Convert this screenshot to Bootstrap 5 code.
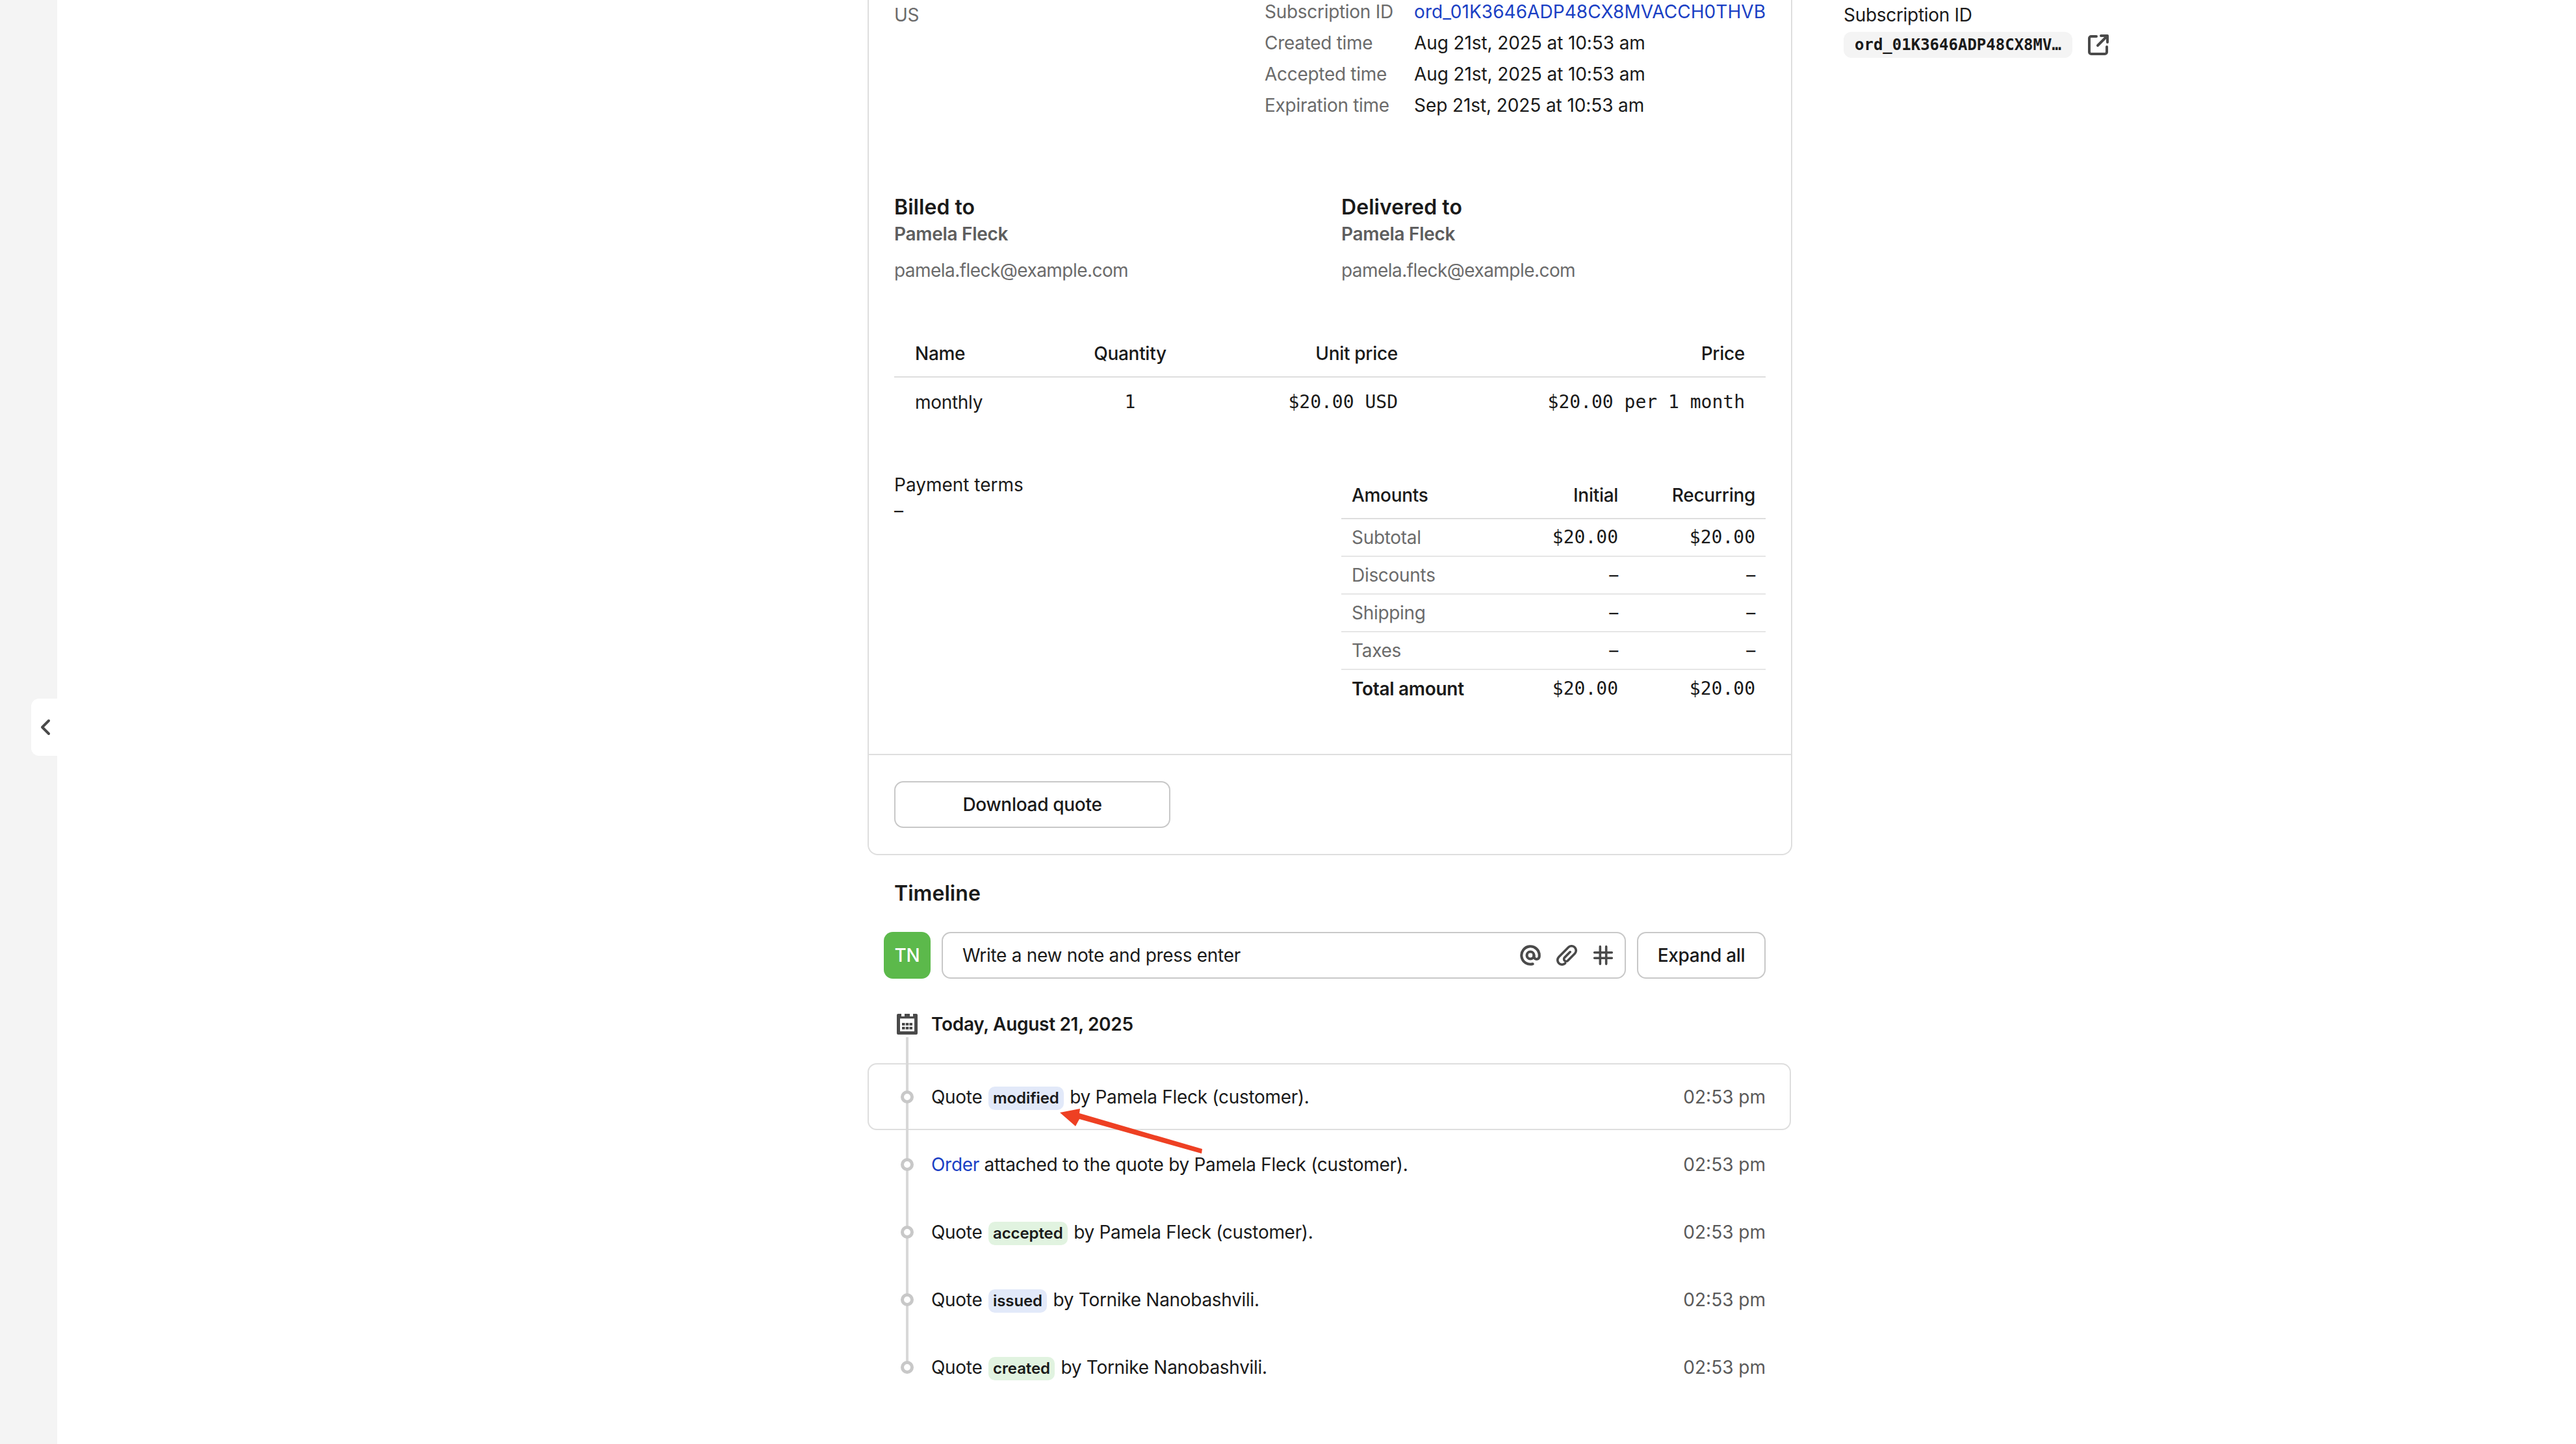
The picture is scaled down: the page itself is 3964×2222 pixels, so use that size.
<!DOCTYPE html>
<html lang="en">
<head>
  <meta charset="UTF-8" />
  <title>Quote</title>
  <link href="https://cdn.jsdelivr.net/npm/bootstrap@5.3.2/dist/css/bootstrap.min.css" rel="stylesheet">
  <style>
    body { font-family: Inter, "Liberation Sans", sans-serif; font-size: 28px; line-height: 40px; letter-spacing: -0.3px; color: #1a1a1a; background: #fff; overflow: hidden; }
    .mono { font-family: "DejaVu Sans Mono", "Liberation Mono", monospace; letter-spacing: 0; }
    .muted-text { color: #6b6b6b; }
    a.blue-link { color: #1a3fc4; text-decoration: none; }
    .info-row a.blue-link { letter-spacing: 0.05px; }

    .side-rail { width: 88px; background: #f4f4f4; flex-shrink: 0; }
    .rail-tab { top: 1075px; left: 48px; width: 40px; height: 88px; background: #fff; border-radius: 12px 0 0 12px; padding-left: 3px; }
    .page-main { margin-top: -6px; padding-left: 1247px; }

    .quote-card { width: 1423px; border: 2px solid #dedede; border-top: 0; border-radius: 0 0 16px 16px; --bs-card-bg: #fff; }
    .quote-body { padding: 0 39px 72px; }
    .quote-foot { padding: 40px 39px; background: #fff; border-top: 2px solid #dedede; border-radius: 0 0 16px 16px !important; }
    .us-cell { padding-top: 9px; }
    .info-row { height: 48px; line-height: 48px; }
    .info-label { width: 230px; }
    .info-value { letter-spacing: -0.1px; }
    .bill-row { margin-top: 113px; }
    .split-left { width: 688px; flex-shrink: 0; }
    .sec-title { font-size: 32px; font-weight: 600; letter-spacing: 0.05px; }
    .person-name { font-weight: 600; color: #5e5e5e; margin-top: 1px; }
    .person-mail { margin-top: 16px; letter-spacing: -0.55px; }

    .item-table { table-layout: fixed; margin: 72px 0 70px; --bs-table-color: #1a1a1a; }
    .item-table th, .item-table td { padding: 0 32px; vertical-align: middle; font-weight: 500; }
    .item-table thead th { height: 72px; border-bottom: 2px solid #dedede; }
    .item-table tbody td { height: 76px; border: 0; font-weight: 400; }
    .w-name { width: 224px; } .w-qty { width: 278px; } .w-unit { width: 305px; }
    .terms-label { letter-spacing: 0; }

    .sum-table { table-layout: fixed; width: 653px; margin: 0; --bs-table-color: #1a1a1a; }
    .sum-table th, .sum-table td { padding: 0 16px; vertical-align: middle; height: 58px; border-bottom: 2px solid #e6e6e6; font-weight: 400; white-space: nowrap; }
    .sum-table thead th { height: 72px; font-weight: 500; border-bottom-color: #dedede; }
    .sum-table tr:last-child td { border-bottom: 0; }
    .sum-table .total-label { font-weight: 600; }
    .w-initial { width: 236px; } .w-recur { width: 211px; }
    .sum-table td.muted-text { color: #6b6b6b; }

    .plain-btn { font-size: 28px; font-weight: 500; line-height: 40px; letter-spacing: -0.3px; color: #1a1a1a; background: #fff; border: 2px solid #c8c8c8; border-radius: 14px; height: 72px; padding: 0; }
    .dl-btn { width: 425px; }
    .expand-btn { width: 198px; }

    .timeline-head { margin: 39px 0 0 41px; }
    .note-row { margin: 39px 0 0 25px; width: 1357px; gap: 17px; }
    .avatar-box { width: 72px; height: 72px; background: #5cb94b; color: #fff; border-radius: 14px; font-weight: 500; flex-shrink: 0; }
    .note-field { height: 72px; border: 2px solid #c8c8c8; border-radius: 14px; padding: 0 17px 0 30px; gap: 24px; }
    .note-input { padding: 0; font-size: 28px; letter-spacing: -0.3px; color: #1a1a1a; }
    .note-input::placeholder { color: #1a1a1a; opacity: 1; }
    .note-icon { width: 32px; height: 32px; flex-shrink: 0; fill: none; stroke: #4a4a4a; stroke-width: 2.7; stroke-linecap: round; stroke-linejoin: round; }
    .note-icon.clip-icon { stroke-width: 2.4; }

    .date-row { margin: 54px 0 44px 45px; height: 32px; gap: 21px; font-weight: 600; }
    .cal-icon { width: 32px; height: 32px; flex-shrink: 0; }

    .event-list { width: 1421px; }
    .event-list::before { content: ""; position: absolute; left: 59px; top: -40px; bottom: 53px; width: 4px; background: #d8d8d8; }
    .event-row { height: 104px; padding: 0 37px 0 49px; border: 2px solid transparent; border-radius: 14px; }
    .event-row.picked { border-color: #dedede; height: 103px; margin-bottom: 1px; }
    .event-dot { width: 20px; height: 20px; border: 5px solid #c8c8c8; border-radius: 50%; background: #fff; margin-right: 27px; flex-shrink: 0; z-index: 1; }
    .event-time { color: #5a5a5a; letter-spacing: 0; }
    .state-pill { display: inline-block; font-size: 24px; font-weight: 600; line-height: 36px; padding: 0 7px; border-radius: 10px; margin: 0 2px; vertical-align: 0; letter-spacing: -0.1px; }
    .pill-blue { background: #e2e9f9; }
    .pill-green { background: #e1f3e0; }
    .arrow-mark { left: 1620px; top: 1695px; width: 240px; height: 85px; }

    .side-info { margin-left: 79px; padding-top: 9px; }
    .copy-row { margin-top: 6px; gap: 24px; }
    .id-pill { width: 352px; height: 40px; line-height: 40px; padding-left: 17px; background: #f4f4f4; border-radius: 12px; font-size: 24px; font-weight: 700; }
    .ext-icon { width: 32px; height: 32px; fill: none; stroke: #4a4a4a; stroke-width: 4; stroke-linecap: round; stroke-linejoin: round; }
  </style>
</head>
<body class="position-relative">
  <div class="d-flex min-vh-100">
    <div class="side-rail"></div>
    <div class="page-main d-flex align-items-start">

      <div>
        <div class="card quote-card">
          <div class="card-body quote-body">
            <div class="d-flex justify-content-between">
              <div class="us-cell muted-text">US</div>
              <div class="quote-info">
                <div class="info-row d-flex"><div class="info-label muted-text">Subscription ID</div><a class="blue-link" href="#">ord_01K3646ADP48CX8MVACCH0THVB</a></div>
                <div class="info-row d-flex"><div class="info-label muted-text">Created time</div><div class="info-value">Aug 21st, 2025 at 10:53 am</div></div>
                <div class="info-row d-flex"><div class="info-label muted-text">Accepted time</div><div class="info-value">Aug 21st, 2025 at 10:53 am</div></div>
                <div class="info-row d-flex"><div class="info-label muted-text">Expiration time</div><div class="info-value">Sep 21st, 2025 at 10:53 am</div></div>
              </div>
            </div>

            <div class="bill-row d-flex">
              <div class="split-left">
                <div class="sec-title">Billed to</div>
                <div class="person-name">Pamela Fleck</div>
                <div class="person-mail muted-text">pamela.fleck@example.com</div>
              </div>
              <div>
                <div class="sec-title">Delivered to</div>
                <div class="person-name">Pamela Fleck</div>
                <div class="person-mail muted-text">pamela.fleck@example.com</div>
              </div>
            </div>

            <table class="table item-table">
              <thead>
                <tr>
                  <th class="w-name">Name</th>
                  <th class="w-qty text-center">Quantity</th>
                  <th class="w-unit text-end">Unit price</th>
                  <th class="text-end">Price</th>
                </tr>
              </thead>
              <tbody>
                <tr>
                  <td>monthly</td>
                  <td class="text-center mono">1</td>
                  <td class="text-end mono">$20.00 USD</td>
                  <td class="text-end mono">$20.00 per 1 month</td>
                </tr>
              </tbody>
            </table>

            <div class="d-flex">
              <div class="split-left">
                <div class="terms-label">Payment terms</div>
                <div>–</div>
              </div>
              <table class="table sum-table">
                <thead>
                  <tr>
                    <th>Amounts</th>
                    <th class="w-initial text-end">Initial</th>
                    <th class="w-recur text-end">Recurring</th>
                  </tr>
                </thead>
                <tbody>
                  <tr><td class="muted-text">Subtotal</td><td class="text-end mono">$20.00</td><td class="text-end mono">$20.00</td></tr>
                  <tr><td class="muted-text">Discounts</td><td class="text-end">–</td><td class="text-end">–</td></tr>
                  <tr><td class="muted-text">Shipping</td><td class="text-end">–</td><td class="text-end">–</td></tr>
                  <tr><td class="muted-text">Taxes</td><td class="text-end">–</td><td class="text-end">–</td></tr>
                  <tr><td class="total-label">Total amount</td><td class="text-end mono">$20.00</td><td class="text-end mono">$20.00</td></tr>
                </tbody>
              </table>
            </div>
          </div>
          <div class="card-footer quote-foot">
            <button class="btn plain-btn dl-btn" type="button">Download quote</button>
          </div>
        </div>

        <div class="timeline-head sec-title">Timeline</div>

        <div class="note-row d-flex align-items-center">
          <div class="avatar-box d-flex align-items-center justify-content-center">TN</div>
          <div class="note-field d-flex align-items-center flex-grow-1">
            <input class="form-control border-0 shadow-none note-input flex-grow-1" type="text" placeholder="Write a new note and press enter">
            <svg class="note-icon" viewBox="1.500 1.500 21 21"><circle cx="12" cy="12" r="3.6"/><path d="M15.600 12v1.200a2.700 2.700 0 0 0 5.400 0V12a9 9 0 1 0-6.600 8.700"/></svg>
            <svg class="note-icon clip-icon" viewBox="1.500 1.500 21 21"><path d="M15.400 8.600 9.800 14.200a2.260 2.260 0 0 0 3.200 3.200L20 10.400A4.500 4.500 0 0 0 13.600 4L4 13.600A4.500 4.500 0 0 0 10.400 20"/></svg>
            <svg class="note-icon" viewBox="0 0 24 24"><path d="M8.500 2v20M15.500 2v20M2 8.800h20M2 15.200h20"/></svg>
          </div>
          <button class="btn plain-btn expand-btn" type="button">Expand all</button>
        </div>

        <div class="date-row d-flex align-items-center">
          <svg class="cal-icon" viewBox="0 0 32 32">
            <path fill="#4a4a4a" d="M0 2a2 2 0 0 1 2-2h5v4h5V0h8v4h5V0h5a2 2 0 0 1 2 2v28a2 2 0 0 1-2 2H2a2 2 0 0 1-2-2z"/>
            <rect x="5" y="7.300" width="22" height="19.700" fill="#fff"/>
            <g fill="#4a4a4a">
              <rect x="8" y="14" width="4.500" height="4"/><rect x="13.800" y="14" width="4.500" height="4"/><rect x="19.500" y="14" width="4.500" height="4"/>
              <rect x="8" y="20" width="4.500" height="4"/><rect x="13.800" y="20" width="4.500" height="4"/><rect x="19.500" y="20" width="4.500" height="4"/>
            </g>
          </svg>
          <div>Today, August 21, 2025</div>
        </div>

        <div class="event-list position-relative">
          <div class="event-row picked d-flex align-items-center">
            <span class="event-dot position-relative"></span>
            <div class="flex-grow-1">Quote <span class="state-pill pill-blue">modified</span> by Pamela Fleck (customer).</div>
            <div class="event-time">02:53 pm</div>
          </div>
          <div class="event-row d-flex align-items-center">
            <span class="event-dot position-relative"></span>
            <div class="flex-grow-1"><a class="blue-link" href="#">Order</a> attached to the quote by Pamela Fleck (customer).</div>
            <div class="event-time">02:53 pm</div>
          </div>
          <div class="event-row d-flex align-items-center">
            <span class="event-dot position-relative"></span>
            <div class="flex-grow-1">Quote <span class="state-pill pill-green">accepted</span> by Pamela Fleck (customer).</div>
            <div class="event-time">02:53 pm</div>
          </div>
          <div class="event-row d-flex align-items-center">
            <span class="event-dot position-relative"></span>
            <div class="flex-grow-1">Quote <span class="state-pill pill-blue">issued</span> by Tornike Nanobashvili.</div>
            <div class="event-time">02:53 pm</div>
          </div>
          <div class="event-row d-flex align-items-center">
            <span class="event-dot position-relative"></span>
            <div class="flex-grow-1">Quote <span class="state-pill pill-green">created</span> by Tornike Nanobashvili.</div>
            <div class="event-time">02:53 pm</div>
          </div>
        </div>
      </div>

      <div class="side-info">
        <div>Subscription ID</div>
        <div class="copy-row d-flex align-items-center">
          <div class="id-pill mono">ord_01K3646ADP48CX8MV…</div>
          <svg class="ext-icon" viewBox="0 0 32 32"><path d="M13 3H5a3 3 0 0 0-3 3v21a3 3 0 0 0 3 3h21a3 3 0 0 0 3-3v-8"/><path d="M15 17 29 3M20 2h10v10"/></svg>
        </div>
      </div>
    </div>
  </div>

  <div class="rail-tab position-absolute d-flex align-items-center justify-content-center">
    <svg width="16" height="26" viewBox="0 0 16 26" fill="none" stroke="#4a4a4a" stroke-width="4" stroke-linecap="round" stroke-linejoin="round"><path d="M13 3 3 13l10 10"/></svg>
  </div>

  <!-- red annotation arrow drawn over the timeline -->
  <svg class="arrow-mark position-absolute" viewBox="0 0 240 85">
    <path fill="#ee4023" d="M230 73 229 80 41 27 35 38 11 17 42 11 41 18z"/>
  </svg>
</body>
</html>
